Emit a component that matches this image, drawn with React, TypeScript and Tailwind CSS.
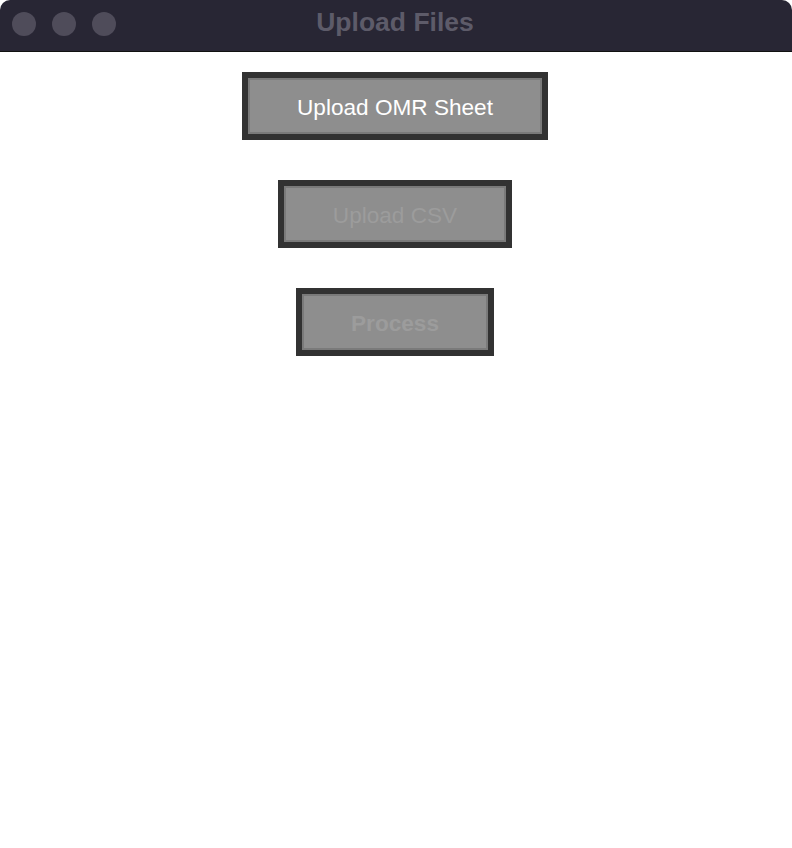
const Light = () => <span className="block h-[24px] w-[24px] rounded-full bg-[#4f4c5a]" />;

const FileButton = ({ label, width, enabled, bold }: { label: string, width: string, enabled: boolean, bold?: boolean }) => (
  <button
    className={`${width} h-[68px] border-[6px] border-[#323232] bg-[#323232]`}
    disabled={!enabled}
  >
    <span
      className={`flex h-full w-full items-center justify-center border-2 border-[#7a7a7a] bg-[#8e8e8e] pt-[3px] text-[22.6px] ${bold ? "font-bold" : "font-normal"} ${enabled ? "text-white" : "text-[#9c9c9c]"}`}
    >
      {label}
    </span>
  </button>
);

export default function App() {
  return (
    <div className="h-[848px] w-[792px] bg-white font-['Liberation_Sans',Arial,sans-serif]">
      <div className="flex h-full flex-col overflow-hidden rounded-[10px]">
        <div className="relative flex h-[52px] shrink-0 items-center border-b border-[#111] bg-[#282634]">
          <div className="flex gap-[16px] pb-[4px] pl-[12px]">
            <Light />
            <Light />
            <Light />
          </div>
          {/* title centred over the whole bar */}
          <div className="absolute inset-0 flex items-center justify-center pb-[5px] pr-[2px] text-[26.5px] font-bold text-[#5d5b69]">
            Upload Files
          </div>
        </div>
        <div className="flex flex-1 flex-col items-center gap-[40px] bg-white pr-[2px] pt-[20px]">
          <FileButton label="Upload OMR Sheet" width="w-[306px]" enabled />
          <FileButton label="Upload CSV" width="w-[234px]" enabled={false} />
          <FileButton label="Process" width="w-[198px]" enabled={false} bold />
        </div>
      </div>
    </div>
  );
}
